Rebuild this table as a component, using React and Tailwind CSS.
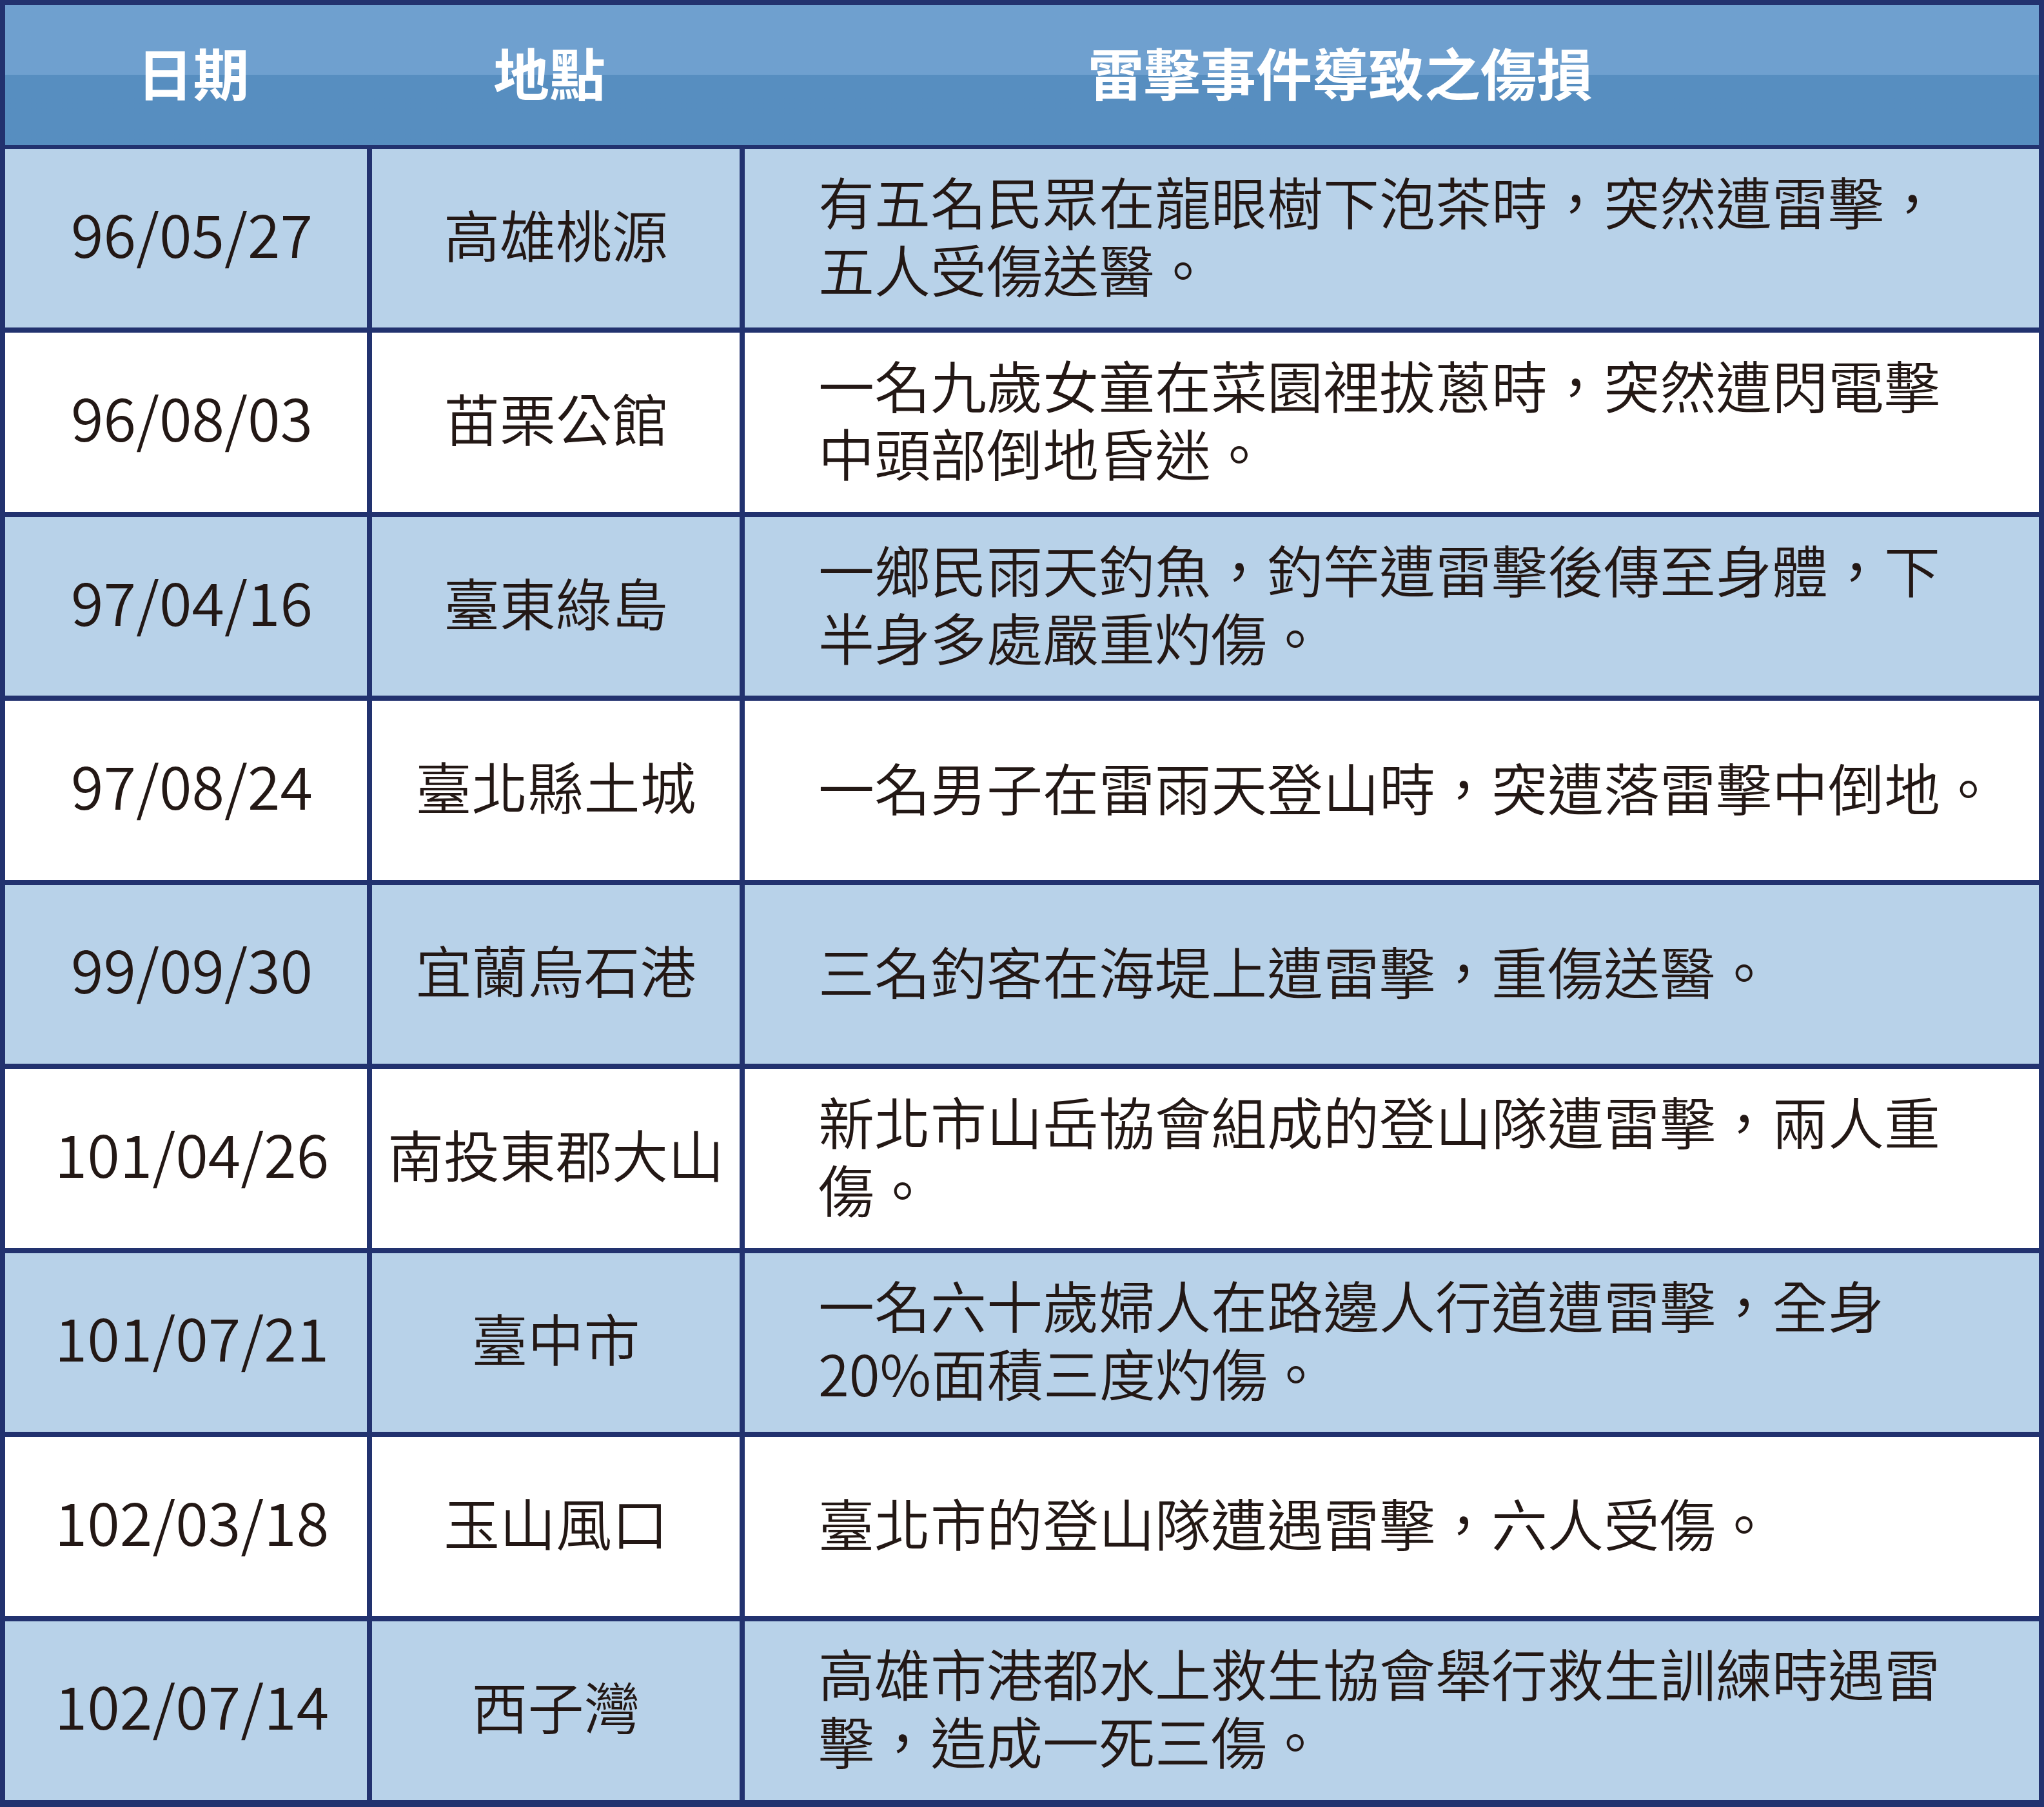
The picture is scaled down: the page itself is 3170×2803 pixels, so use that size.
import React from "react";

const rows = [
  { date: "96/05/27", place: "高雄桃源", lines: ["有五名民眾在龍眼樹下泡茶時，突然遭雷擊，", "五人受傷送醫。"] },
  { date: "96/08/03", place: "苗栗公館", lines: ["一名九歲女童在菜園裡拔蔥時，突然遭閃電擊", "中頭部倒地昏迷。"] },
  { date: "97/04/16", place: "臺東綠島", lines: ["一鄉民雨天釣魚，釣竿遭雷擊後傳至身體，下", "半身多處嚴重灼傷。"] },
  { date: "97/08/24", place: "臺北縣土城", lines: ["一名男子在雷雨天登山時，突遭落雷擊中倒地。"] },
  { date: "99/09/30", place: "宜蘭烏石港", lines: ["三名釣客在海堤上遭雷擊，重傷送醫。"] },
  { date: "101/04/26", place: "南投東郡大山", lines: ["新北市山岳協會組成的登山隊遭雷擊，兩人重", "傷。"] },
  { date: "101/07/21", place: "臺中市", lines: ["一名六十歲婦人在路邊人行道遭雷擊，全身", "20%面積三度灼傷。"] },
  { date: "102/03/18", place: "玉山風口", lines: ["臺北市的登山隊遭遇雷擊，六人受傷。"] },
  { date: "102/07/14", place: "西子灣", lines: ["高雄市港都水上救生協會舉行救生訓練時遇雷", "擊，造成一死三傷。"] },
];

export default function App() {
  return (
    <div className="w-[3170px] h-[2803px] bg-[#22326f] pt-[8px] px-[8px] pb-[11px] flex flex-col font-['Noto_Sans_CJK_TC','Noto_Sans',sans-serif] text-[#231815]">
      {/* Header */}
      <div className="h-[217px] shrink-0 grid grid-cols-[561px_578px_1fr] items-center pb-[12px] bg-linear-to-b from-[#6fa0cf] from-50% to-[#578ec0] to-50% text-white font-bold text-[87px] leading-[110px]">
        <div className="pl-[22px] text-center">日期</div>
        <div className="text-center pr-[12px]">地點</div>
        <div className="text-center pr-[152px]">雷擊事件導致之傷損</div>
      </div>

      {/* Body */}
      <div className="mt-[6px] flex-1 grid grid-cols-[561px_570px_1fr] grid-rows-9 gap-x-[8px] gap-y-[8px] font-[350]">
        {rows.map((r, i) => {
          const bg = i % 2 === 0 ? "bg-[#b8d2e9]" : "bg-white";
          return (
            <React.Fragment key={r.date}>
              <div className={`${bg} flex items-center justify-center pl-[18px] pb-[20px] text-[92px] leading-[110px]`}>
                {r.date}
              </div>
              <div className={`${bg} flex items-center justify-center pb-[16px] text-[87px] leading-[110px] whitespace-nowrap`}>
                {r.place}
              </div>
              <div className={`${bg} flex flex-col justify-center pl-[114px] pb-[12px] text-[87px] leading-[105px] whitespace-nowrap`}>
                {r.lines.map((l) => (
                  <div key={l}>{l}</div>
                ))}
              </div>
            </React.Fragment>
          );
        })}
      </div>
    </div>
  );
}
